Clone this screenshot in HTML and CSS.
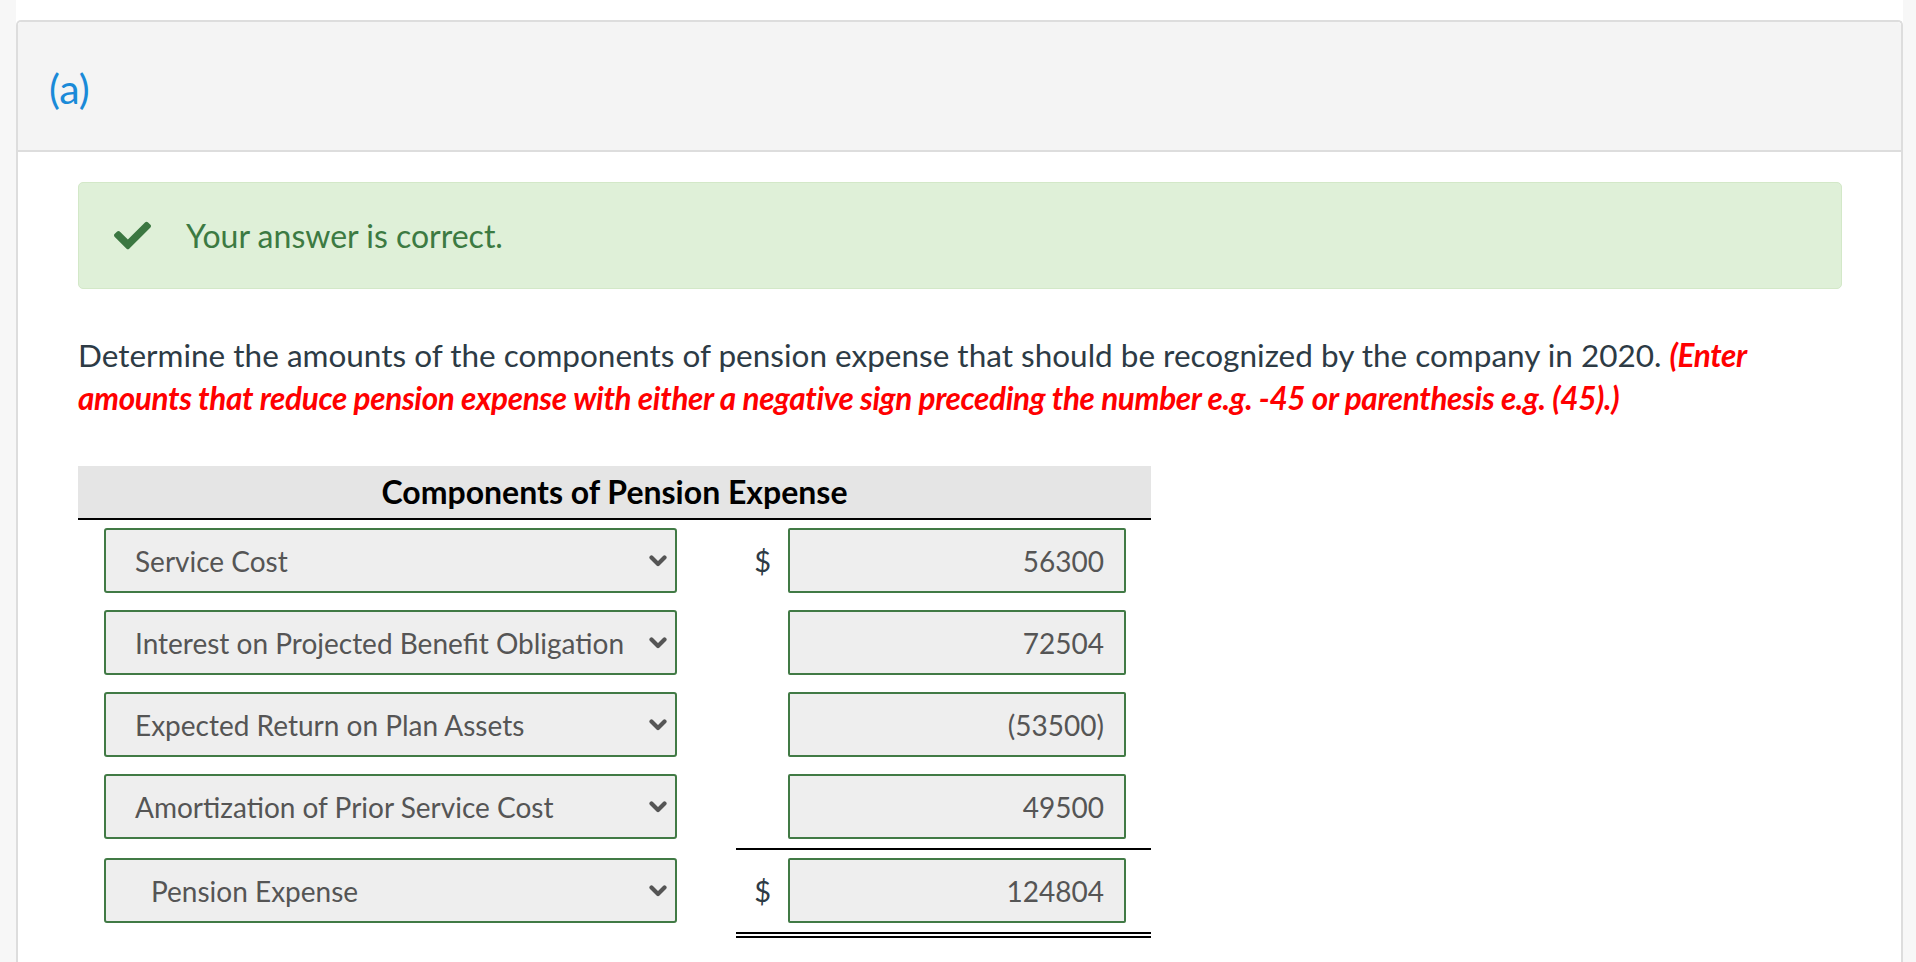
FILE: index.html
```html
<!DOCTYPE html>
<html lang="en">
<head>
<meta charset="utf-8">
<title>Pension Expense</title>
<link rel="stylesheet" href="styles.css">
</head>
<body>
<div class="page">
  <section class="panel">
    <header class="panel-head"><span class="part">(a)</span></header>
    <div class="panel-body">
      <div class="alert">
        <svg class="check" viewBox="0 72 512 370" aria-hidden="true"><path d="M173.898 439.404l-166.4-166.4c-9.997-9.997-9.997-26.206 0-36.204l36.203-36.204c9.997-9.998 26.207-9.998 36.204 0L192 312.690 432.095 72.596c9.997-9.997 26.207-9.997 36.204 0l36.203 36.204c9.997 9.997 9.997 26.206 0 36.204l-294.4 294.401c-9.998 9.997-26.207 9.997-36.204-.001z"/></svg>
        <span class="alert-text">Your answer is correct.</span>
      </div>
      <p class="question">Determine the amounts of the components of pension expense that should be recognized by the company in 2020. <em class="hint">(Enter amounts that reduce pension expense with either a negative sign preceding the number e.g. -45 or parenthesis e.g. (45).)</em></p>

      <div class="sheet">
        <div class="sheet-head">Components of Pension Expense</div>

        <div class="row first">
          <div class="cell-label"><div class="select"><span>Service Cost</span><svg class="chev" viewBox="0 0 18 12"><path d="M2.5 2.5l6.5 6.5 6.5-6.5"/></svg></div></div>
          <div class="cell-dollar">$</div>
          <div class="cell-amount"><div class="amount">56300</div></div>
        </div>
        <div class="row">
          <div class="cell-label"><div class="select"><span>Interest on Projected Benefit Obligation</span><svg class="chev" viewBox="0 0 18 12"><path d="M2.5 2.5l6.5 6.5 6.5-6.5"/></svg></div></div>
          <div class="cell-dollar"></div>
          <div class="cell-amount"><div class="amount">72504</div></div>
        </div>
        <div class="row">
          <div class="cell-label"><div class="select"><span>Expected Return on Plan Assets</span><svg class="chev" viewBox="0 0 18 12"><path d="M2.5 2.5l6.5 6.5 6.5-6.5"/></svg></div></div>
          <div class="cell-dollar"></div>
          <div class="cell-amount"><div class="amount">(53500)</div></div>
        </div>
        <div class="row">
          <div class="cell-label"><div class="select"><span>Amortization of Prior Service Cost</span><svg class="chev" viewBox="0 0 18 12"><path d="M2.5 2.5l6.5 6.5 6.5-6.5"/></svg></div></div>
          <div class="cell-dollar"></div>
          <div class="cell-amount"><div class="amount">49500</div></div>
        </div>
        <div class="row total">
          <div class="cell-label"><div class="select indent"><span>Pension Expense</span><svg class="chev" viewBox="0 0 18 12"><path d="M2.5 2.5l6.5 6.5 6.5-6.5"/></svg></div></div>
          <div class="cell-dollar">$</div>
          <div class="cell-amount"><div class="amount">124804</div></div>
        </div>
      </div>
    </div>
  </section>
</div>
</body>
</html>
```

FILE: styles.css
```css
html, body {
  margin: 0;
  padding: 0;
}
body {
  background: #f7f7f7;
  font-family: Lato, "Noto Sans", "Liberation Sans", sans-serif;
  color: #2d3b45;
}
.page {
  margin-left: 16px;
  width: 1887px;
  min-height: 962px;
  background: #ffffff;
  padding-top: 20px;
  box-sizing: border-box;
}
.panel {
  border: 2px solid #dddddd;
  border-bottom: none;
  border-radius: 5px 5px 0 0;
  min-height: 942px;
  box-sizing: border-box;
}
.panel-head {
  background: #f4f4f4;
  border-bottom: 2px solid #dddddd;
  border-radius: 4px 4px 0 0;
  display: flex;
  align-items: center;
  padding-left: 31px;
  padding-top: 4px;
  height: 124px;
}
.part {
  color: #1a8ad8;
  font-size: 41px;
}
.panel-body {
  padding: 30px 59px 0 60px;
}
.alert {
  height: 105px;
  background: #dff0d8;
  border: 1px solid #d3e8c8;
  border-radius: 5px;
  display: flex;
  align-items: center;
  padding-left: 35px;
}
.check {
  width: 37px;
  height: 29px;
  fill: #3b7741;
  flex: none;
}
.alert-text {
  margin-left: 35px;
  color: #3c7a42;
  font-size: 32px;
}
.question {
  margin: 45px 0 0 0;
  font-size: 31.5px;
  line-height: 43.4px;
}
.hint {
  color: #ff0000;
  font-weight: 700;
  font-style: italic;
  letter-spacing: -0.35px;
}
.sheet {
  margin-top: 45px;
  width: 1073px;
}
.sheet-head {
  height: 52px;
  background: #e5e5e5;
  border-bottom: 2px solid #000000;
  display: flex;
  align-items: center;
  justify-content: center;
  font-weight: 700;
  font-size: 32px;
  color: #000000;
}
.row {
  display: grid;
  grid-template-columns: 658px 52px 363px;
  margin-top: 17px;
}
.row.first {
  margin-top: 8px;
}
.row.total {
  margin-top: 9px;
}
.cell-label {
  padding-left: 26px;
}
.cell-dollar {
  font-size: 29px;
  padding-right: 17px;
  display: flex;
  align-items: center;
  justify-content: flex-end;
}
.total .cell-label {
  padding-top: 10px;
}
.total .cell-dollar,
.total .cell-amount {
  border-top: 2px solid #000000;
  border-bottom: 6px double #000000;
  padding-top: 8px;
  padding-bottom: 9px;
}
.select {
  width: 573px;
  height: 65px;
  box-sizing: border-box;
  border: 2px solid #417a45;
  border-radius: 3px;
  background: #eeeeee;
  display: flex;
  align-items: center;
  justify-content: space-between;
  padding: 2px 8px 0 29px;
  font-size: 28px;
  color: #555555;
}
.select.indent {
  padding-left: 45px;
}
.chev {
  width: 18px;
  height: 12px;
  fill: none;
  stroke: #555555;
  stroke-width: 4.2;
  stroke-linecap: round;
  stroke-linejoin: round;
  flex: none;
}
.amount {
  width: 338px;
  height: 65px;
  box-sizing: border-box;
  border: 2px solid #417a45;
  border-radius: 2px;
  background: #eeeeee;
  display: flex;
  align-items: center;
  justify-content: flex-end;
  padding: 2px 20px 0 0;
  font-size: 28px;
  color: #555555;
}
```
